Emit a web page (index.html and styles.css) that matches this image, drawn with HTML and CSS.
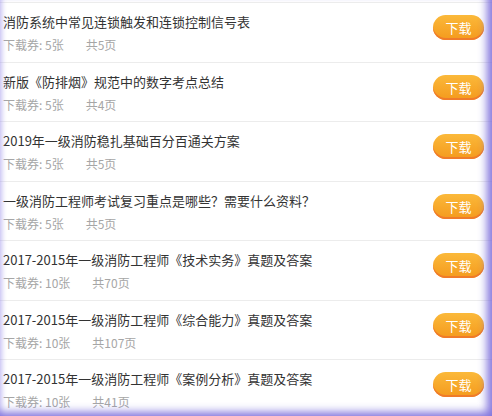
FILE: index.html
```html
<!DOCTYPE html>
<html lang="zh-CN">
<head>
  <meta charset="UTF-8">
  <meta name="viewport" content="width=device-width, initial-scale=1.0">
  <title>资料下载</title>
  <link rel="stylesheet" href="styles.css">
</head>
<body>
  <div class="page">
    <ul class="doc-list">
      <li class="doc-item">
        <div class="doc-info">
          <p class="doc-title">消防系统中常见连锁触发和连锁控制信号表</p>
          <p class="doc-meta"><span class="coupon">下载券: 5张</span><span>共5页</span></p>
        </div>
        <button class="download-btn">下载</button>
      </li>
      <li class="doc-item">
        <div class="doc-info">
          <p class="doc-title">新版《防排烟》规范中的数字考点总结</p>
          <p class="doc-meta"><span class="coupon">下载券: 5张</span><span>共4页</span></p>
        </div>
        <button class="download-btn">下载</button>
      </li>
      <li class="doc-item">
        <div class="doc-info">
          <p class="doc-title">2019年一级消防稳扎基础百分百通关方案</p>
          <p class="doc-meta"><span class="coupon">下载券: 5张</span><span>共5页</span></p>
        </div>
        <button class="download-btn">下载</button>
      </li>
      <li class="doc-item">
        <div class="doc-info">
          <p class="doc-title">一级消防工程师考试复习重点是哪些？需要什么资料？</p>
          <p class="doc-meta"><span class="coupon">下载券: 5张</span><span>共5页</span></p>
        </div>
        <button class="download-btn">下载</button>
      </li>
      <li class="doc-item">
        <div class="doc-info">
          <p class="doc-title">2017-2015年一级消防工程师《技术实务》真题及答案</p>
          <p class="doc-meta"><span class="coupon">下载券: 10张</span><span>共70页</span></p>
        </div>
        <button class="download-btn">下载</button>
      </li>
      <li class="doc-item">
        <div class="doc-info">
          <p class="doc-title">2017-2015年一级消防工程师《综合能力》真题及答案</p>
          <p class="doc-meta"><span class="coupon">下载券: 10张</span><span>共107页</span></p>
        </div>
        <button class="download-btn">下载</button>
      </li>
      <li class="doc-item">
        <div class="doc-info">
          <p class="doc-title">2017-2015年一级消防工程师《案例分析》真题及答案</p>
          <p class="doc-meta"><span class="coupon">下载券: 10张</span><span>共41页</span></p>
        </div>
        <button class="download-btn">下载</button>
      </li>
    </ul>
  </div>
</body>
</html>
```

FILE: styles.css
```css
body {
  margin: 0;
  font-family: "Noto Sans CJK SC", "Noto Sans", sans-serif;
  background-color: #ffffff;
  overflow: hidden;
}

.page {
  position: relative;
  height: 416px;
  overflow: hidden;
  background-color: #ffffff;
}

/* sombra roxa nas bordas da janela */
.page::after {
  content: "";
  position: absolute;
  inset: 0;
  pointer-events: none;
  box-shadow: inset -7px -6px 8px -2px rgba(110, 95, 215, 0.85),
              inset 5px 0 5px -3px rgba(160, 150, 235, 0.6);
}

.doc-list {
  list-style: none;
  margin: 2px 0 0;
  padding: 0;
}

.doc-item {
  display: flex;
  justify-content: space-between;
  align-items: flex-start;
  height: 58.5px;
  border-top: 1px solid #ececec;
  padding: 0 8px 0 3px;
}

.doc-info {
  padding-top: 10px;
}

.doc-title {
  margin: 0;
  font-size: 13px;
  line-height: 18px;
  color: #333333;
  white-space: nowrap;
}

.doc-meta {
  margin: 5px 0 0;
  font-size: 12px;
  line-height: 18px;
  color: #a6a6a6;
}

.coupon {
  margin-right: 22px;
}

.download-btn {
  margin-top: 12px;
  width: 51px;
  height: 25px;
  border: none;
  border-radius: 13px;
  background: linear-gradient(#fbb93a, #f49a1d);
  box-shadow: inset 0 -2px 0 #f07b2a;
  color: #ffffff;
  font-family: "Noto Sans CJK SC", sans-serif;
  font-size: 13px;
  line-height: 25px;
  padding: 0;
  cursor: pointer;
}
```
